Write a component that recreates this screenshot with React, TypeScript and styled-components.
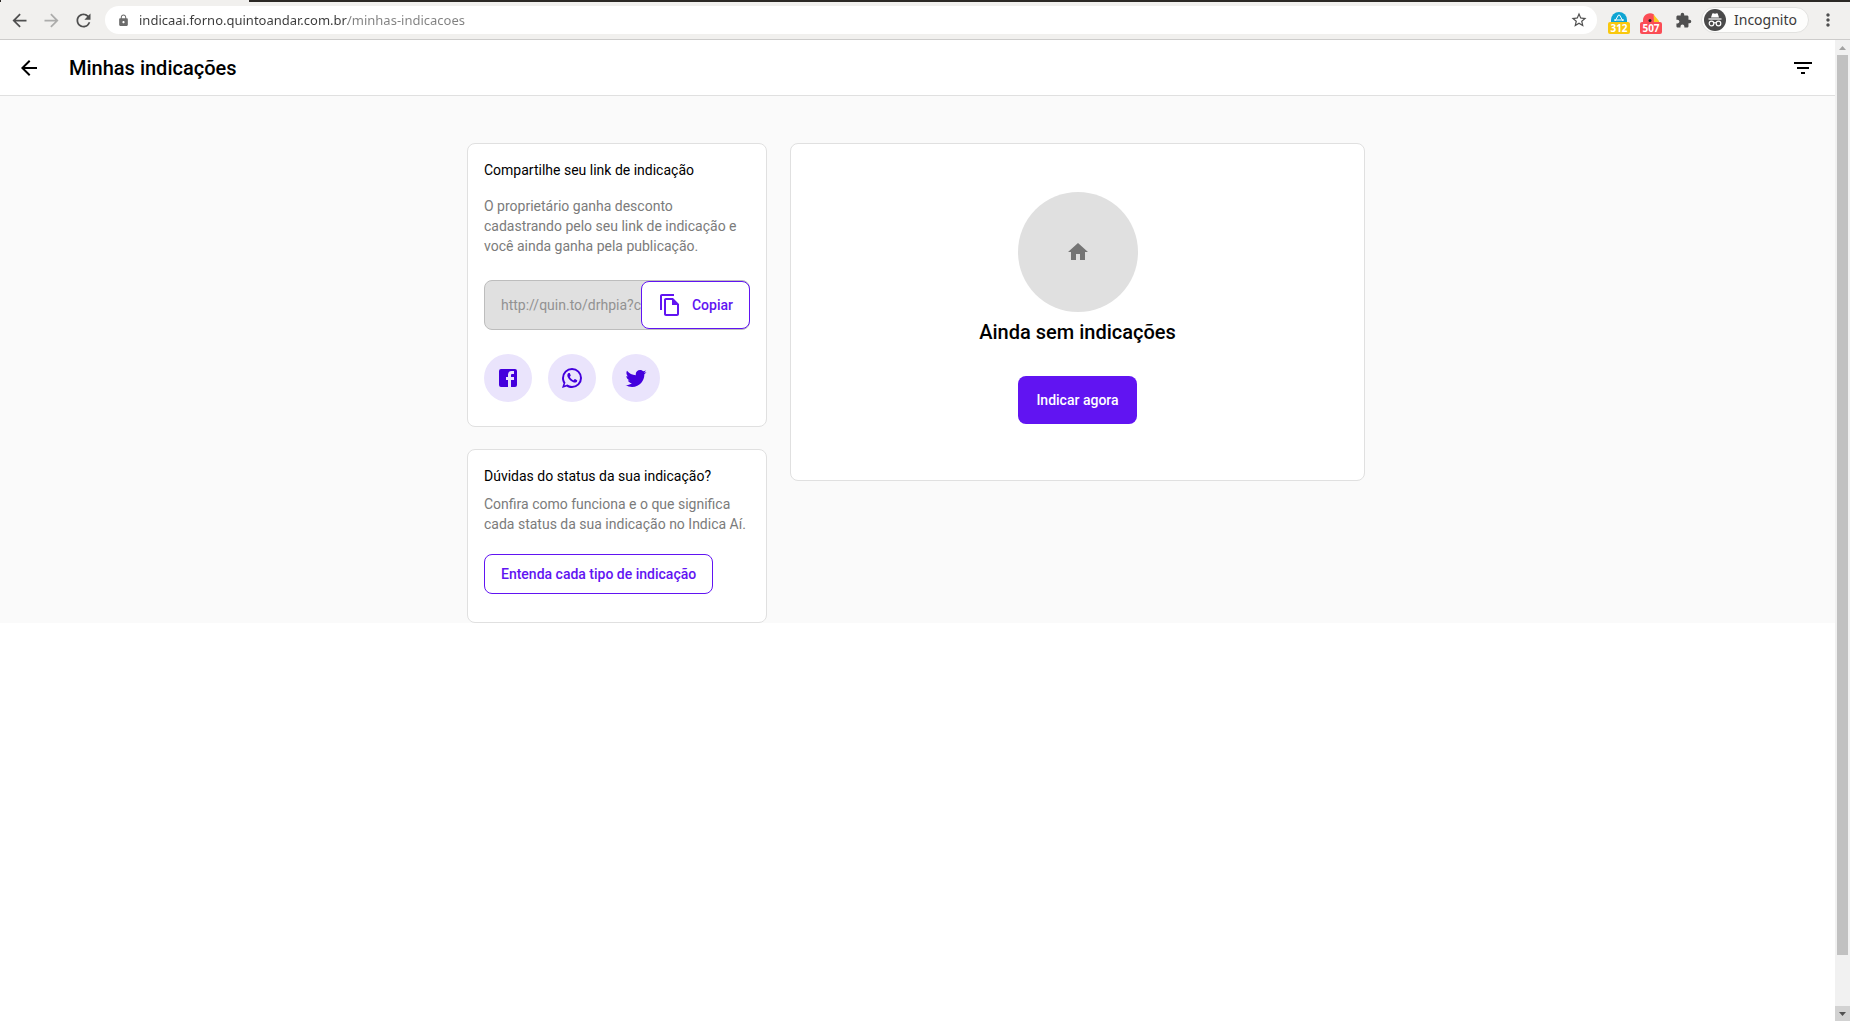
import React from "react";
import styled, { createGlobalStyle } from "styled-components";
import {
  MdArrowBack,
  MdArrowForward,
  MdExtension,
  MdFilterList,
  MdHome,
  MdLock,
  MdMoreVert,
  MdRefresh,
  MdStarBorder,
} from "react-icons/md";

const color = {
  primary: "#6114f2",
  primaryDark: "#4400dd",
  primaryLight: "#eae4fc",
  line: "#e0e0e0",
  muted: "#7b7b7b",
  page: "#fafafa",
  chrome: "#f1f0ee",
  chromeIcon: "#4f4f4f",
};

const GlobalStyle = createGlobalStyle`
  *, *::before, *::after { box-sizing: border-box; }
  html, body { margin: 0; padding: 0; }
  body { background: #fff; color: #000; font-family: Roboto, "Liberation Sans", sans-serif; font-size: 14px; line-height: 20px; }
  button, input { font: inherit; margin: 0; }
  button { cursor: pointer; }
  svg { display: block; flex: none; }
  h1, h2, p { margin: 0; }
`;

const Window = styled.div`
  display: flex;
  flex-direction: column;
  height: 100vh;
`;

const TabStrip = styled.div`
  display: flex;
  height: 2px;
  background: #2b2825;
`;

const ActiveTab = styled.div`
  width: 248px;
  margin-left: 1px;
  background: ${color.chrome};
`;

const Toolbar = styled.div`
  display: flex;
  align-items: center;
  height: 38px;
  padding: 0 6px 1px 3px;
  background: ${color.chrome};
  border-bottom: 1px solid #cdcccb;
  font-family: "Noto Sans", sans-serif;
`;

const ToolButton = styled.button<{ $faded?: boolean }>`
  display: flex;
  align-items: center;
  justify-content: center;
  width: 32px;
  height: 28px;
  padding: 0;
  border: 0;
  background: none;
  color: ${(p) => (p.$faded ? "#acacab" : color.chromeIcon)};
`;

const AddressBar = styled.label`
  display: flex;
  flex: 1;
  align-items: center;
  gap: 9px;
  height: 28px;
  margin: 0 6px;
  padding: 0 2px 0 12px;
  border-radius: 14px;
  background: #fff;
  color: #6b6b6b;
`;

const Address = styled.input`
  flex: 1;
  min-width: 0;
  height: 24px;
  padding: 0;
  border: 0;
  outline: 0;
  background: linear-gradient(90deg, #3a3a3a 209px, #808080 209px);
  background-clip: text;
  -webkit-text-fill-color: transparent;
  font-size: 13px;
`;

const Extension = styled(ToolButton)`
  flex-direction: column;
  justify-content: flex-end;
`;

const Badge = styled.span<{ $bg: string }>`
  width: 22px;
  height: 12px;
  border-radius: 2px;
  background: ${(p) => p.$bg};
  color: #fff;
  font-size: 10px;
  font-weight: 700;
  line-height: 12px;
  text-align: center;
`;

const Profile = styled.button`
  display: flex;
  align-items: center;
  gap: 8px;
  height: 26px;
  margin: 0 3px 0 2px;
  padding: 0 11px 0 2px;
  border: 1px solid #e2e2e0;
  border-radius: 13px;
  background: #fdfdfc;
  color: #3a3a3a;
  font-size: 14px;
`;

const Viewport = styled.div`
  display: flex;
  flex: 1;
  min-height: 0;
`;

const Page = styled.div`
  flex: 1;
  min-width: 0;
  overflow: hidden;
`;

const Header = styled.header`
  display: flex;
  align-items: center;
  gap: 28px;
  height: 56px;
  padding: 0 20px 0 17px;
  border-bottom: 1px solid ${color.line};
`;

const HeaderTitle = styled.h1`
  flex: 1;
  font-size: 20px;
  font-weight: 500;
  line-height: 24px;
`;

const IconButton = styled.button`
  padding: 0;
  border: 0;
  background: none;
  color: #000;
`;

const Main = styled.main`
  display: grid;
  grid-template-columns: 300px 575px;
  justify-content: center;
  align-items: start;
  gap: 23px;
  padding: 47px 3px 0 0;
  background: ${color.page};
`;

const Sidebar = styled.div`
  display: flex;
  flex-direction: column;
  gap: 22px;
`;

const Card = styled.section`
  padding: 16px 16px 24px;
  border: 1px solid ${color.line};
  border-radius: 8px;
  background: #fff;
`;

const CardTitle = styled.h2`
  font-size: 14px;
  font-weight: 400;
  line-height: 20px;
`;

const CardText = styled.p<{ $top: number }>`
  margin-top: ${(p) => p.$top}px;
  color: ${color.muted};
`;

const LinkField = styled.div`
  display: flex;
  align-items: center;
  height: 50px;
  margin-top: 24px;
  border: 1px solid #bdbdbd;
  border-radius: 8px;
  background: ${color.line};
`;

const LinkInput = styled.input`
  flex: 1;
  min-width: 0;
  height: 48px;
  padding: 0 0 0 16px;
  border: 0;
  outline: 0;
  background: none;
  color: #929292;
`;

const OutlineButton = styled.button`
  display: flex;
  align-items: center;
  gap: 10px;
  height: 48px;
  padding: 0 16px;
  border: 1px solid ${color.primary};
  border-radius: 8px;
  background: #fff;
  color: ${color.primary};
  font-size: 14px;
  font-weight: 500;
  white-space: nowrap;
`;

const CopyButton = styled(OutlineButton)`
  margin-right: -1px;
`;

const StatusButton = styled(OutlineButton)`
  height: 40px;
  margin-top: 20px;
  margin-bottom: 4px;
`;

const ShareRow = styled.div`
  display: flex;
  gap: 16px;
  margin-top: 24px;
`;

const ShareLink = styled.a`
  display: flex;
  align-items: center;
  justify-content: center;
  width: 48px;
  height: 48px;
  border-radius: 50%;
  background: ${color.primaryLight};
  color: ${color.primaryDark};
`;

const EmptyCard = styled(Card)`
  display: flex;
  flex-direction: column;
  align-items: center;
  padding: 48px 16px 56px;
`;

const EmptyIcon = styled.div`
  display: flex;
  align-items: center;
  justify-content: center;
  width: 120px;
  height: 120px;
  border-radius: 50%;
  background: ${color.line};
  color: #757575;
`;

const EmptyTitle = styled.h2`
  margin-top: 8px;
  font-size: 20px;
  font-weight: 500;
  line-height: 24px;
`;

const PrimaryButton = styled.button`
  min-width: 119px;
  height: 48px;
  margin-top: 32px;
  padding: 0 16px;
  border: 0;
  border-radius: 8px;
  background: ${color.primary};
  color: #fff;
  font-weight: 500;
`;

const Scrollbar = styled.div`
  display: flex;
  flex-direction: column;
  width: 15px;
  background: #f1f1f1;
`;

const ScrollButton = styled.button<{ $active?: boolean }>`
  display: flex;
  align-items: center;
  justify-content: center;
  height: 15px;
  padding: 0;
  border: 0;
  background: ${(p) => (p.$active ? "#d2d2d2" : "transparent")};
  color: ${(p) => (p.$active ? "#505050" : "#a3a3a3")};
`;

const ScrollTrack = styled.div`
  flex: 1;
  padding: 0 2px;
`;

const ScrollThumb = styled.div`
  height: 94.6%;
  background: #c1c1c1;
`;

const Glyph = ({ d, size = 24 }: { d: string; size?: number }) => (
  <svg width={size} height={size} viewBox="0 0 24 24" fill="currentColor" aria-hidden="true">
    <path d={d} />
  </svg>
);

const paths = {
  back: "M20 11H7.83l5.59-5.59L12 4l-8 8 8 8 1.41-1.41L7.83 13H20v-2z",
  copy: "M16 1H4c-1.1 0-2 .9-2 2v14h2V3h12V1zm-1 4H8c-1.1 0-1.99.9-1.99 2L6 21c0 1.1.89 2 1.99 2H19c1.1 0 2-.9 2-2V11l-6-6zM8 21V7h6v5h5v9H8z",
  facebook:
    "M5,3H19A2,2 0 0,1 21,5V19A2,2 0 0,1 19,21H5A2,2 0 0,1 3,19V5A2,2 0 0,1 5,3M18,5H15.5A3.5,3.5 0 0,0 12,8.5V11H10V14H12V21H15V14H18V11H15V9A1,1 0 0,1 16,8H18V5Z",
  whatsapp:
    "M16.75,13.96C17,14.09 17.16,14.16 17.21,14.26C17.27,14.37 17.25,14.87 17,15.44C16.8,16 15.76,16.54 15.3,16.56C14.84,16.58 14.83,16.92 12.34,15.83C9.85,14.74 8.35,12.08 8.23,11.91C8.11,11.74 7.27,10.53 7.31,9.3C7.36,8.08 8,7.5 8.26,7.26C8.5,7 8.77,6.97 8.94,7H9.41C9.56,7 9.77,6.94 9.96,7.45L10.65,9.32C10.71,9.45 10.75,9.6 10.66,9.76L10.39,10.17L10,10.59C9.88,10.71 9.74,10.84 9.88,11.09C10,11.35 10.5,12.18 11.2,12.87C12.11,13.75 12.91,14.04 13.15,14.17C13.39,14.31 13.54,14.29 13.69,14.13L14.5,13.19C14.69,12.94 14.85,13 15.08,13.08L16.75,13.96M12,2A10,10 0 0,1 22,12A10,10 0 0,1 12,22C10.03,22 8.2,21.43 6.65,20.45L2,22L3.55,17.35C2.57,15.8 2,13.97 2,12A10,10 0 0,1 12,2M12,4A8,8 0 0,0 4,12C4,13.72 4.54,15.31 5.46,16.61L4.5,19.5L7.39,18.54C8.69,19.46 10.28,20 12,20A8,8 0 0,0 20,12A8,8 0 0,0 12,4Z",
  twitter:
    "M22.46,6C21.69,6.35 20.86,6.58 20,6.69C20.88,6.16 21.56,5.32 21.88,4.31C21.05,4.81 20.13,5.16 19.16,5.36C18.37,4.5 17.26,4 16,4C13.65,4 11.73,5.92 11.73,8.29C11.73,8.63 11.77,8.96 11.84,9.27C8.28,9.09 5.11,7.38 3,4.79C2.63,5.42 2.42,6.16 2.42,6.94C2.42,8.43 3.17,9.75 4.33,10.5C3.62,10.5 2.96,10.3 2.38,10C2.38,10 2.38,10 2.38,10.03C2.38,12.11 3.86,13.85 5.82,14.24C5.46,14.34 5.08,14.39 4.69,14.39C4.42,14.39 4.15,14.36 3.89,14.31C4.43,16 6,17.26 7.89,17.29C6.43,18.45 4.58,19.13 2.56,19.13C2.22,19.13 1.88,19.11 1.54,19.07C3.44,20.29 5.7,21 8.12,21C16,21 20.33,14.46 20.33,8.79C20.33,8.6 20.33,8.42 20.32,8.23C21.16,7.63 21.88,6.87 22.46,6Z",
};

const BlueExtensionIcon = () => (
  <svg width="16" height="10" viewBox="0 0 16 10" aria-hidden="true">
    <path d="M0 8a8 8 0 0 1 16 0v2H0z" fill="#0fa5d3" />
    <path d="M4 9 7.500 3h1L12 9M3 8h10" stroke="#fff" strokeWidth="1" fill="none" />
  </svg>
);

const RedExtensionIcon = () => (
  <svg width="16" height="9" viewBox="0 0 16 9" aria-hidden="true">
    <path d="M0 9V7a7 7 0 0 1 11-5.500L12 9z" fill="#fb4d55" />
    <path d="M10.500 1.500 16 8v1h-5z" fill="#fbc91b" />
    <circle cx="7" cy="7.500" r="1.500" fill="#222" />
  </svg>
);

const IncognitoIcon = () => (
  <svg width="22" height="22" viewBox="0 0 22 22" aria-hidden="true">
    <circle cx="11" cy="11" r="11" fill="#4a4a4a" />
    <path d="M7 8.500 8.300 4.600Q9 4 11 4.800 13 4 13.700 4.600L15 8.500z" fill="#fff" />
    <path d="M4.500 10h13" stroke="#fff" strokeWidth="1.200" />
    <g fill="none" stroke="#fff" strokeWidth="1.200">
      <circle cx="7.500" cy="14.500" r="2.300" />
      <circle cx="14.500" cy="14.500" r="2.300" />
      <path d="M9.800 14q1.200-.7 2.400 0" />
    </g>
  </svg>
);

const BrowserToolbar = () => (
  <>
    <TabStrip>
      <ActiveTab />
    </TabStrip>
    <Toolbar>
      <ToolButton aria-label="Voltar página"><MdArrowBack size={21} /></ToolButton>
      <ToolButton aria-label="Avançar" $faded><MdArrowForward size={21} /></ToolButton>
      <ToolButton aria-label="Recarregar"><MdRefresh size={21} /></ToolButton>
      <AddressBar>
        <MdLock size={13} />
        <Address
          aria-label="Endereço"
          defaultValue="indicaai.forno.quintoandar.com.br/minhas-indicacoes"
        />
        <ToolButton aria-label="Favoritar"><MdStarBorder size={18} /></ToolButton>
      </AddressBar>
      <Extension aria-label="Extensão 312">
        <BlueExtensionIcon />
        <Badge $bg="#f9c80e">312</Badge>
      </Extension>
      <Extension aria-label="Extensão 507">
        <RedExtensionIcon />
        <Badge $bg="#fb4d55">507</Badge>
      </Extension>
      <ToolButton aria-label="Extensões"><MdExtension size={17} /></ToolButton>
      <Profile>
        <IncognitoIcon />
        Incognito
      </Profile>
      <ToolButton aria-label="Menu"><MdMoreVert size={20} /></ToolButton>
    </Toolbar>
  </>
);

const ShareCard = () => (
  <Card>
    <CardTitle>Compartilhe seu link de indicação</CardTitle>
    <CardText $top={16}>
      O proprietário ganha desconto cadastrando pelo seu link de indicação e você ainda ganha pela
      publicação.
    </CardText>
    <LinkField>
      <LinkInput aria-label="Link de indicação" readOnly value="http://quin.to/drhpia?c" />
      <CopyButton>
        <Glyph d={paths.copy} />
        Copiar
      </CopyButton>
    </LinkField>
    <ShareRow>
      <ShareLink href="#facebook" aria-label="Facebook"><Glyph d={paths.facebook} /></ShareLink>
      <ShareLink href="#whatsapp" aria-label="WhatsApp"><Glyph d={paths.whatsapp} /></ShareLink>
      <ShareLink href="#twitter" aria-label="Twitter"><Glyph d={paths.twitter} /></ShareLink>
    </ShareRow>
  </Card>
);

const StatusCard = () => (
  <Card>
    <CardTitle>Dúvidas do status da sua indicação?</CardTitle>
    <CardText $top={8}>
      Confira como funciona e o que significa cada status da sua indicação no Indica Aí.
    </CardText>
    <StatusButton>Entenda cada tipo de indicação</StatusButton>
  </Card>
);

export default function App() {
  return (
    <Window>
      <GlobalStyle />
      <BrowserToolbar />
      <Viewport>
        <Page>
          <Header>
            <IconButton aria-label="Voltar"><Glyph d={paths.back} /></IconButton>
            <HeaderTitle>Minhas indicações</HeaderTitle>
            <IconButton aria-label="Filtrar"><MdFilterList size={24} /></IconButton>
          </Header>
          <Main>
            <Sidebar>
              <ShareCard />
              <StatusCard />
            </Sidebar>
            <EmptyCard>
              <EmptyIcon><MdHome size={24} /></EmptyIcon>
              <EmptyTitle>Ainda sem indicações</EmptyTitle>
              <PrimaryButton>Indicar agora</PrimaryButton>
            </EmptyCard>
          </Main>
        </Page>
        <Scrollbar>
          <ScrollButton aria-label="Rolar para cima">
            <svg width="7" height="4" viewBox="0 0 7 4"><path d="M0 4 3.500 0 7 4z" fill="currentColor" /></svg>
          </ScrollButton>
          <ScrollTrack>
            <ScrollThumb />
          </ScrollTrack>
          <ScrollButton $active aria-label="Rolar para baixo">
            <svg width="7" height="4" viewBox="0 0 7 4"><path d="M0 0 3.500 4 7 0z" fill="currentColor" /></svg>
          </ScrollButton>
        </Scrollbar>
      </Viewport>
    </Window>
  );
}
